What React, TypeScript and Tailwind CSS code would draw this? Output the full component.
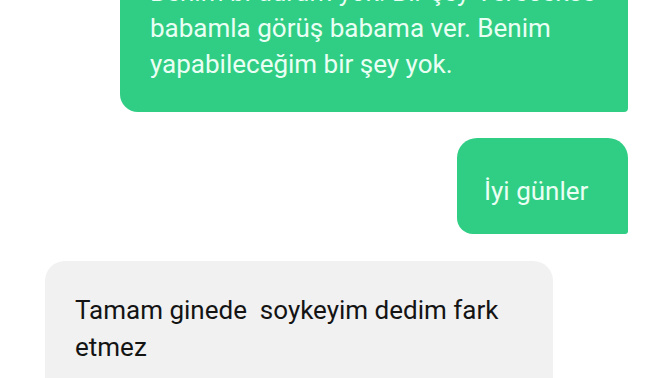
import React from "react";

export default function App() {
  return (
    <div
      className="w-[672px] h-[378px] overflow-hidden bg-white"
      style={{ fontFamily: "Roboto, 'Noto Sans', sans-serif" }}
    >
      <div className="flex flex-col mt-[-46px] pl-[45px] pr-[44px]">
        <div className="self-end w-[508px] bg-[#2fce84] rounded-bl-[18px] rounded-br-[4px] pl-[30px] pr-[16px] pt-[20px] pb-[30px] text-[26px] leading-[36px] text-[#eafff4]">
          <div className="whitespace-nowrap">Benim bi durum yok. Bir şey Verecekse</div>
          <div>babamla görüş babama ver. Benim</div>
          <div>yapabileceğim bir şey yok.</div>
        </div>
        <div className="self-end mt-[26px] w-[171px] bg-[#2fce84] rounded-tl-[20px] rounded-tr-[20px] rounded-bl-[16px] rounded-br-[3px] pl-[27px] pt-[35px] pb-[25px] text-[26px] leading-[36px] text-[#eafff4]">
          İyi günler
        </div>
        <div className="self-start mt-[27px] w-[508px] h-[200px] bg-[#f1f1f1] rounded-tl-[20px] rounded-tr-[20px] pl-[30px] pt-[31px] text-[26px] leading-[37px] text-[#141414]">
          <div className="whitespace-pre">Tamam ginede  soykeyim dedim fark</div>
          <div>etmez</div>
        </div>
      </div>
    </div>
  );
}
